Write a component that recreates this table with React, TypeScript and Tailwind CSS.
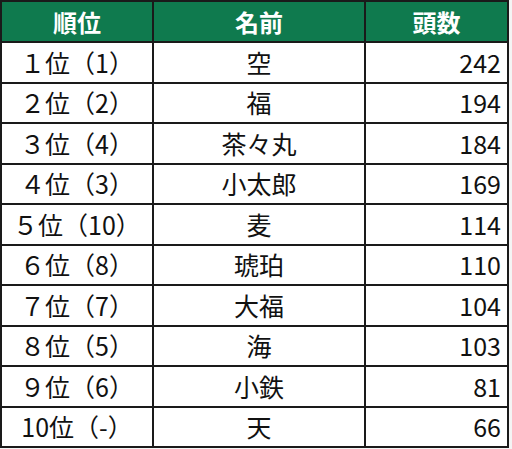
const rows = [
  { rank: "１位（1）", name: "空", count: 242 },
  { rank: "２位（2）", name: "福", count: 194 },
  { rank: "３位（4）", name: "茶々丸", count: 184 },
  { rank: "４位（3）", name: "小太郎", count: 169 },
  { rank: "５位（10）", name: "麦", count: 114 },
  { rank: "６位（8）", name: "琥珀", count: 110 },
  { rank: "７位（7）", name: "大福", count: 104 },
  { rank: "８位（5）", name: "海", count: 103 },
  { rank: "９位（6）", name: "小鉄", count: 81 },
  { rank: "10位（-）", name: "天", count: 66 },
];

export default function App() {
  return (
    <div className="w-[512px] h-[449px] bg-[#f4f4f4] font-['Noto_Sans_CJK_JP','Noto_Sans',sans-serif]">
      <div className="w-[509px] border-2 border-[#1a1a1a] bg-white">
        <div className="grid grid-cols-[152px_212px_1fr] h-[39px] bg-[#0f7a4e] text-white font-bold text-[24px] leading-none">
          <div className="flex items-center justify-center border-r-2 border-[#1a1a1a]">順位</div>
          <div className="flex items-center justify-center border-r-2 border-[#1a1a1a]">名前</div>
          <div className="flex items-center justify-center">頭数</div>
        </div>
        {rows.map((r) => (
          <div
            key={r.rank}
            className="grid grid-cols-[152px_212px_1fr] h-[40.5px] border-t-2 border-[#1a1a1a] text-[25px] leading-none text-[#111]"
          >
            <div className="flex items-center justify-center border-r-2 border-[#1a1a1a]">{r.rank}</div>
            <div className="flex items-center justify-center border-r-2 border-[#1a1a1a]">{r.name}</div>
            <div className="flex items-center justify-end pr-[6px]">{r.count}</div>
          </div>
        ))}
      </div>
    </div>
  );
}
